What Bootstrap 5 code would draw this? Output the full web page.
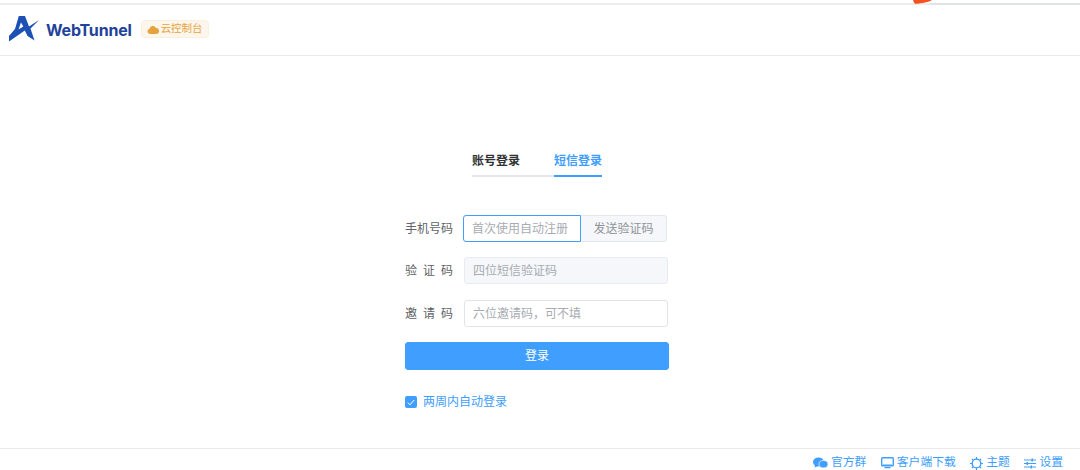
<!DOCTYPE html>
<html lang="zh">
<head>
<meta charset="utf-8">
<title>WebTunnel</title>
<link href="https://cdn.jsdelivr.net/npm/bootstrap@5.3.0/dist/css/bootstrap.min.css" rel="stylesheet">
<style>
html,body{height:470px;overflow:hidden;background:#fff}
body{font-family:"Liberation Sans","Noto Sans CJK SC",sans-serif;font-size:12px;color:#606266}
.top-strip{height:5px;padding-top:3px;position:relative}
.top-line{height:2px;background:linear-gradient(90deg,#ececec 0,#ececec 930px,#dfe3e9 930px,#dfe3e9 100%)}
.top-flame{position:absolute;left:913px;top:0}
.head-bar{height:51px;border-bottom:1px solid #e8eaee;padding-left:8px}
.brand-logo{margin-top:-3px}
.brand-name{font-family:"Inter","Liberation Sans",sans-serif;font-size:16px;font-weight:700;color:#1f429b;margin-left:7px;letter-spacing:-.2px}
.console-tag{margin-left:9px;margin-bottom:2px;height:18px;padding:0 5px;background:#fdf6ec;border:1px solid #fbf0e0;border-radius:4px;color:#e6a23c;font-size:10.5px;gap:2px}
.page-main{height:392px;padding-top:96px}
.login-box{width:264px;margin-left:405px}
.tab-row{margin-left:67px;width:130px;height:25px;border-bottom:2px solid #e4e7ed}
.tab-item{font-size:12px;font-weight:600;line-height:17px;height:25px;color:#303133;padding-top:1px}
.tab-item.on{color:#409eff;border-bottom:2px solid #409eff;margin-left:34px}
.form-line{height:27px;margin-bottom:16px}
.form-line.first{margin-top:38px;margin-bottom:15px}
.form-name{width:59px;font-size:12px;color:#606266;white-space:nowrap}
.spread{letter-spacing:6px}
.text-box{height:27px;width:204px;border:1px solid #e2e4ea;border-radius:3px;padding:0 8px;font-size:12px;color:#606266;background:#fff;outline:none;font-family:inherit}
.text-box::placeholder{color:#a8abb2;opacity:1}
.text-box.off{background:#f5f7fa;border-color:#e9ebf0}
.text-box.act{width:118px;margin-left:-1px;border-color:#409eff;border-radius:3px 0 0 3px}
.send-btn{height:27px;width:86px;border:1px solid #e4e7ed;border-left:0;border-radius:0 3px 3px 0;background:#f5f7fa;color:#909399;font-size:12px;padding:0}
.login-btn{display:block;width:264px;height:28px;background:#409eff;border:1px solid #409eff;border-radius:3px;color:#fff;font-size:12px;padding:0;margin-top:-1px}
.remember{margin-top:25px;height:14px;color:#409eff;gap:6px}
.tick-box{width:12px;height:12px;background:#409eff;border-radius:2px}
.foot-bar{height:22px;border-top:1px solid #e8eaee;padding:7px 17px 0 0;gap:14.5px;color:#409eff;font-size:11.8px}
.foot-item{gap:3px}
</style>
</head>
<body>
<div class="top-strip"><div class="top-line"></div>
  <svg class="top-flame" width="20" height="4" viewBox="0 0 20 4"><path fill="#f4511e" d="M0 0H19C16 2 9 3.500 2 3.800 1 3 .5 1.500 0 0z"/></svg>
</div>
<header class="head-bar d-flex align-items-center">
  <svg class="brand-logo" width="31" height="27" viewBox="0 0 31 27"><path fill="#1c50b4" d="M1 21 7 14 10.800 1H17L21 11.500 31 5 22.500 13.500 26.500 25.500 19.500 21 16.800 15.500 1 26.500zM13 7.500 10.500 14.500 15.300 11.500z" fill-rule="evenodd"/></svg>
  <span class="brand-name">WebTunnel</span>
  <span class="console-tag d-inline-flex align-items-center">
    <svg width="12" height="9" viewBox="0 0 12 9"><path fill="#e6a23c" d="M3 9a2.700 2.700 0 0 1-.5-5.300A3.500 3.500 0 0 1 9 3a3 3 0 0 1 0 6z"/></svg>云控制台
  </span>
</header>
<main class="page-main">
  <div class="login-box">
    <div class="tab-row d-flex">
      <div class="tab-item">账号登录</div>
      <div class="tab-item on">短信登录</div>
    </div>
    <div class="form-line first d-flex align-items-center">
      <span class="form-name">手机号码</span>
      <input class="text-box act" placeholder="首次使用自动注册">
      <button class="send-btn" type="button">发送验证码</button>
    </div>
    <div class="form-line d-flex align-items-center">
      <span class="form-name spread">验证码</span>
      <input class="text-box off" placeholder="四位短信验证码" disabled>
    </div>
    <div class="form-line d-flex align-items-center">
      <span class="form-name spread">邀请码</span>
      <input class="text-box" placeholder="六位邀请码，可不填">
    </div>
    <button class="login-btn" type="button">登录</button>
    <div class="remember d-flex align-items-center">
      <span class="tick-box d-inline-flex align-items-center justify-content-center">
        <svg width="8" height="7" viewBox="0 0 8 7"><path d="M.8 3.600 3 5.800 7.200 1" fill="none" stroke="#fff" stroke-width="1"/></svg>
      </span>
      <span>两周内自动登录</span>
    </div>
  </div>
</main>
<footer class="foot-bar d-flex align-items-center justify-content-end">
  <span class="foot-item d-inline-flex align-items-center">
    <svg width="15" height="12" viewBox="0 0 15 12"><ellipse cx="5.500" cy="5" rx="5.500" ry="4.600" fill="#409eff"/><path d="M2 8l-.5 2.500L5 9z" fill="#409eff"/><ellipse cx="10.500" cy="7.200" rx="4.500" ry="3.700" fill="#409eff" stroke="#fff" stroke-width=".7"/></svg>官方群
  </span>
  <span class="foot-item d-inline-flex align-items-center">
    <svg width="13" height="12" viewBox="0 0 13 12"><rect x=".7" y=".8" width="11.600" height="8" rx=".8" fill="none" stroke="#409eff" stroke-width="1.400"/><path d="M2 7.500h9v1.500H2zM3.500 10h6V11.300h-6z" fill="#409eff"/></svg>客户端下载
  </span>
  <span class="foot-item d-inline-flex align-items-center">
    <svg width="13" height="13" viewBox="0 0 12 12"><circle cx="6" cy="6" r="4" fill="none" stroke="#409eff" stroke-width="1.300"/><path d="M6 0v2.200M6 9.800V12M0 6h2.200M9.800 6H12M1.700 1.700l1.500 1.500M8.800 8.800l1.500 1.500M1.700 10.300l1.500-1.500M8.800 3.200l1.500-1.500" stroke="#409eff" stroke-width="1.100"/></svg>主题
  </span>
  <span class="foot-item d-inline-flex align-items-center">
    <svg width="12" height="11" viewBox="0 0 12 11"><path d="M0 2h12M0 5.500h12M0 9h12" stroke="#409eff" stroke-width="1"/><path d="M7.500 .6h1.500v2.800H7.500zM2.500 4.100H4v2.800H2.500zM6.500 7.600H8v2.800H6.500z" fill="#409eff"/></svg>设置
  </span>
</footer>
<script src="https://cdn.jsdelivr.net/npm/bootstrap@5.3.0/dist/js/bootstrap.bundle.min.js"></script>
</body>
</html>
